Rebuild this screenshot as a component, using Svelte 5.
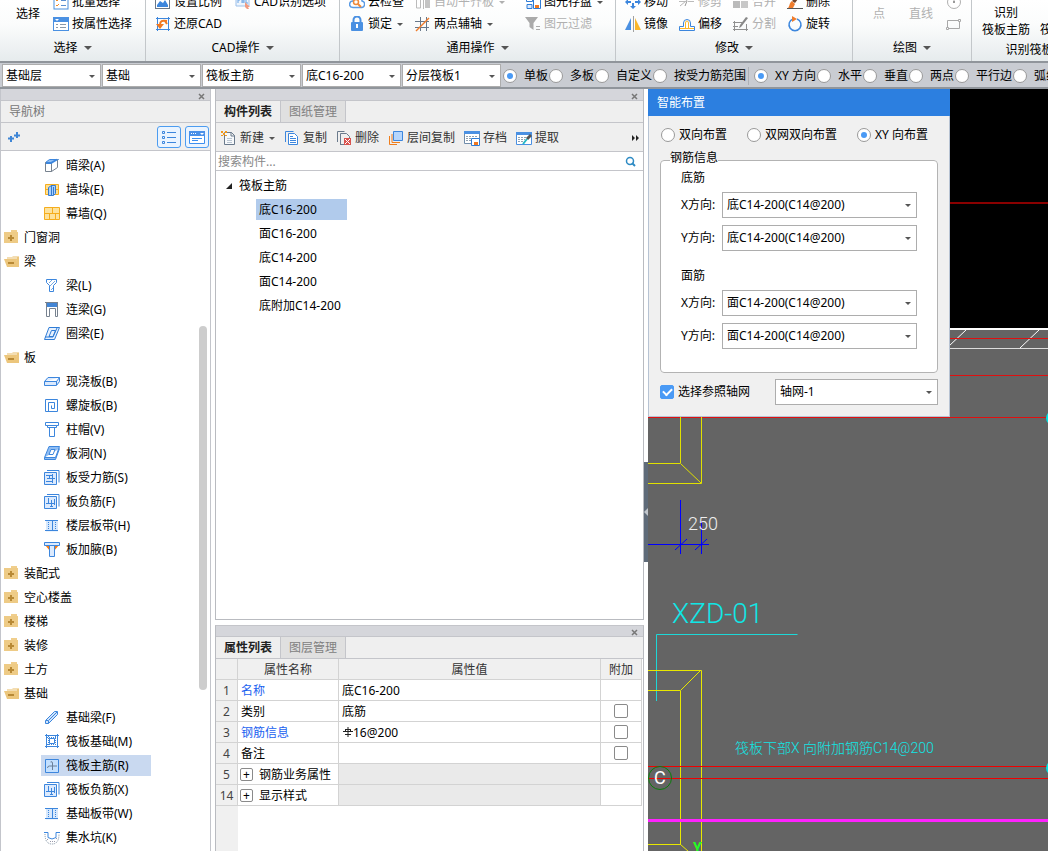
<script>
	const icons = {
		batch: '<rect x="1" y="2" width="14" height="13" fill="#fff" stroke="#4a8fdc"/><path d="M3 6l1 1 2-2M3 11l1 1 2-2" fill="none" stroke="#f08a24"/><path d="M8 6.5h5M8 11.5h5" stroke="#5b8fd0"/>',
		attr: '<rect x=".5" y="1.5" width="15" height="13" fill="#fff" stroke="#4a90e2"/><path d="M0 1h16v5H0z" fill="#4a90e2"/><path d="M2 3h4l-2 2z" fill="#fff"/><path d="M3 8.5h2M3 11.5h2M7 8.5h6M7 11.5h6" stroke="#8a98a8"/>',
		image: '<rect x=".5" y="1.5" width="14" height="13" fill="#fff" stroke="#6d7886"/><path d="M2 13V11l3-4 3 2 2-3 3 5v2z" fill="#3c86dd"/>',
		restore: '<path d="M2.5 1v14M13.5 1v14M1 2.5h14M1 13.5h14" stroke="#3c86dd"/><path d="M5 9c0-4 2-5 7-4" fill="none" stroke="#f07820" stroke-width="2"/><path d="M10 5l2 3" stroke="#f07820" stroke-width="2"/><path d="M1 8h8l-4 5z" fill="#f07820"/>',
		cadopt: '<path d="M1 3h13v9H1z" fill="#eef5fd" stroke="#9cc0ea"/><path d="M3 9V6h2M7 9V6h2v3M7 8h2M11 6v3h2" fill="none" stroke="#6ba4e4"/><path d="M10 8l5 5-2 0 1 2-2 0-2-2z" fill="#f29b80"/>',
		cloud: '<path d="M4 13.5C-1 13 0 7 4 7c1-5 9-4 9 0 4 1 3 6 0 6.5z" fill="#fff" stroke="#5b9be4" stroke-width="1.5"/><circle cx="7" cy="8" r="2.5" fill="none" stroke="#ef8a3a" stroke-width="1.5"/><path d="M9 10l3 3" stroke="#ef8a3a" stroke-width="2"/>',
		lock: '<path d="M4.5 7V4a3.5 3.5 0 017 0v3" fill="none" stroke="#4a90e2" stroke-width="2"/><rect x="2" y="6" width="12" height="9" rx="1" fill="#4a90e2"/><path d="M8 8v4" stroke="#fff" stroke-width="2"/>',
		align: '<path d="M1.5 3h4v11h-4zM8.5 1v14" fill="none" stroke="#bbb"/><path d="M10 6h5v8h-5z" fill="#c4c4c4"/>',
		axis: '<path d="M0 5.5h14M0 11.5h14M5.5 1v14M11.5 1v14" stroke="#68788a"/><path d="M1 15L14 2" stroke="#ef7d2d" stroke-width="1.5"/>',
		save: '<path d="M1.5 2.5h6v5h-6z" fill="#fff" stroke="#2f7cd6"/><path d="M2 10.5h5v4H2z" fill="#dbeaff" stroke="#2f7cd6"/><path d="M8.5 5.5h7v9h-7z" fill="#fff" stroke="#2f7cd6"/><path d="M10 11h4v3h-4z" fill="#f07820"/>',
		filter: '<path d="M0 1h13L8.5 7v7l-4-3V7z" fill="#aaa"/><path d="M11 10.5h4M11 13.5h4" stroke="#aaa"/>',
		move: '<path d="M8 0l3 3H9v3H7V3H5zM8 15l3-3H9V9H7v3H5zM0 8l3-3v2h3v2H3v2zM16 8l-3-3v2h-3v2h3v2z" fill="#3c86dd"/>',
		mirror: '<path d="M6 2v12H0z" fill="#4a90e2"/><path d="M10 2v12h6z" fill="#fcb72a"/><path d="M8.5 0v16" stroke="#a0a0a0"/>',
		trim: '<path d="M1 12L13 2" stroke="#b6b6b6"/><path d="M0 7.5h6M9 7.5h6" stroke="#bbb"/><path d="M6 12l2-5" stroke="#999"/>',
		offset: '<path d="M.5 14.5h15v-4h-4V7a3.5 3.5 0 10-7 0v3.5h-4z" fill="#fff" stroke="#3c86dd"/><path d="M1 12.5h14M6.5 12V7a1.5 2 0 013 0v5" fill="none" stroke="#fcb72a"/>',
		merge: '<rect x="0" y="7" width="7" height="7" fill="#bbb"/><rect x="8" y="7" width="7" height="7" fill="#c8c8c8"/>',
		split: '<path d="M0 6.5h9M0 13.5h15M1.5 5v10M13.5 8v7M0 10.5h5" fill="none" stroke="#909090"/><path d="M15 2l-7 9-2 1 1-3 6-8z" fill="#888"/>',
		erase: '<path d="M0 14.5h16" stroke="#555"/><path d="M14 1l-6 8-3-2 7-7z" fill="#70442c"/><path d="M5 7l3 3-2 4H1c2-2 1-5 4-7z" fill="#ef7c2c"/>',
		rotate: '<path d="M6 3a6 6 0 104 0" fill="none" stroke="#3c86dd" stroke-width="1.5"/><path d="M5 0l5 3-5 3z" fill="#ef7d2d"/>',
		circle: '<circle cx="8" cy="8" r="6.5" fill="none" stroke="#b0b0b0"/><path d="M8 8V2" stroke="#b0b0b0"/><rect x="7" y="7" width="2" height="2" fill="#999"/>',
		rect: '<path d="M1.5 4.5h12v8h-12z" fill="none" stroke="#a8a8a8"/><path d="M.5 11.5h2v2h-2zM12.5 3.5h2v2h-2z" fill="#fff" stroke="#a8a8a8"/>',
		folder: '<path d="M7 0h6v2H7z" fill="#f0ce8c"/><path d="M0 2h14v11H0z" fill="#eecb86"/><path d="M6 5h2v2h2v2H8v2H6V9H4V7h2z" fill="#b88935"/>',
		open: '<path d="M3 3h5l1-1h6v11h-2V6H3z" fill="#f3ddb2"/><path d="M0 5h12l3 8H3z" fill="#ecc67c"/><path d="M12 5h1V3h2v10h-2z" fill="#ecc67c"/><path d="M4 8h6v2H4z" fill="#b88935"/>',
		hidden: '<path d="M1.5 4.5l4-3h9l-4 3z" fill="#8fbdf3" stroke="#3c86dd"/><path d="M1.5 4.5h6v9h-6zM7.5 4.5v9l6-4v-8" fill="#fff" stroke="#77828f"/><path d="M2 5h5l6-3.5" fill="none" stroke="#3c86dd" stroke-width="2"/>',
		pier: '<path d="M1.5 2.5h13v10h-13z" fill="#fddf93" stroke="#f5ad1d"/><path d="M1 7.5h14" stroke="#f5ad1d"/><path d="M4.5 5.5l3-2h4v8l-2 2h-5zM7.5 3v10M9.5 5v8" fill="#a9cffa" stroke="#347bd0"/>',
		curtain: '<path d="M.5 1.5h15v12H.5zM0 7.5h16M8.5 2v6M5.5 8v5M11.5 8v5" fill="#fde29c" stroke="#f5ad1d"/>',
		beam: '<path d="M2.5 1.5h10v3l-3 3v6h-4v-6l-3-3z" fill="#fff" stroke="#3c86dd"/><path d="M5 5l3-3M6 8l5-5M7 12l2-2" stroke="#78a9e0"/>',
		link: '<path d="M2.5 .5h11v14h-2v-8h-6v8h-3z" fill="#fff" stroke="#77828f"/><path d="M3 1h10v4H3z" fill="#4285d5"/><path d="M1 .5h13" stroke="#77828f"/>',
		ring: '<path d="M5 1.5h10.5l-5 12H.5zM7.5 4.5h4l-2.5 6h-4z" fill="#e7f1fe" stroke="#2f7cd6"/><path d="M1 11h8l4-9" fill="none" stroke="#2f7cd6"/>',
		slab: '<path d="M4 3.5h11.5l-3 4H.5zM.5 7.5v4h12l3-4v-4M12.5 7v4" fill="#dceafd" stroke="#3c86dd"/>',
		spiral: '<path d="M1.5 1.5h12v12h-12v-12M4.5 14V4.5h6v6h-3v-3" fill="none" stroke="#3c86dd"/>',
		cap: '<path d="M1.5 .5h13v3h-13z" fill="#fff" stroke="#3c86dd"/><path d="M3.5 3.5h9v2h-9zM5.5 5.5h5v9h-5z" fill="#fff" stroke="#3c86dd"/>',
		hole: '<path d="M5 .5h10.5l-4 11H.5zM.5 11.5v2h11l4-11" fill="#8fbdf3" stroke="#3c86dd"/><path d="M7 3.5h4l-2 5H5z" fill="#fff" stroke="#3c86dd"/>',
		stress: '<path d="M3 .5h12v12" fill="none" stroke="#3c86dd"/><path d="M.5 2.5h12v12H.5z" fill="#dceafd" stroke="#3c86dd"/><path d="M2 5.5h7M3 8.5h8M2 11.5h7M5.5 5v3M8.5 4v9" stroke="#3c86dd"/>',
		negative: '<path d="M3 .5h12v12" fill="none" stroke="#3c86dd"/><path d="M.5 2.5h12v12H.5z" fill="#dceafd" stroke="#3c86dd"/><path d="M4.5 4v6M7.5 6v7M10.5 5v6M2 9.5h9M6 12.5h3" stroke="#3c86dd"/>',
		band: '<path d="M2 2.5h12v11H2z" fill="#d7e8fc"/><path d="M1 2.5h13M1 12.5h13M8.5 2v11" stroke="#3c86dd"/><path d="M4.5 4v8M11.5 4v8" stroke="#3c86dd" stroke-dasharray="1 1"/>',
		haunch: '<path d="M1 3h5v6zM15 3h-5v6z" fill="#f57c14"/><path d="M.5 .5h15v3H.5z" fill="#dceafd" stroke="#3c86dd"/><path d="M5.5 3.5h5v11h-5z" fill="#dceafd" stroke="#3c86dd"/>',
		fbeam: '<path d="M1.5 10.5l9-9h3v3l-9 9h-3z" fill="#d2e5fc" stroke="#3c86dd"/><path d="M2 10.5h2.5v3M5 10l8-8" fill="none" stroke="#3c86dd"/>',
		raft: '<path d="M1 1.5h14M1 12.5h14M2.5 0v14M13.5 0v14M5.5 4.5h5v5h-5z" fill="none" stroke="#3c86dd"/><path d="M3 3.5h10M3 10.5h10M4.5 2v10M11.5 2v10" stroke="#3c86dd" stroke-dasharray="1 1"/>',
		rebar: '<path d="M1.5 1.5h13v13h-13z" fill="#c3e0ff" stroke="#3c86dd"/><path d="M8.5 12V5q0-2-2-1M3.5 10q0-2 2-2H13" fill="none" stroke="#6b8099"/>',
		pit: '<path d="M0 2.5h4v5q4 3 8 0v-5h4" fill="none" stroke="#3c86dd"/><path d="M1 4q0 10 7 10t7-10" fill="none" stroke="#7c8ea0" stroke-dasharray="1 1"/><path d="M3 9.5h2M6 11.5h5M12 8.5h2" stroke="#99a" stroke-dasharray="1 1"/>',
		create: '<path d="M3.5 2.5h7l3 3v9h-10zM10 2v4h4" fill="#f7f9fb" stroke="#6a7a8c"/><path d="M6 8.5h5M6 10.5h5M6 12.5h5" stroke="#b8c4d0"/><path d="M0 1h2v2H0zM4 1h2v2H4zM2 3h2v2H2zM0 5h2v1H0zM4 5h2v1H4z" fill="#f39a1d"/>',
		copy: '<path d="M1.5 12V1.5h8" fill="none" stroke="#3c86dd"/><path d="M4.5 3.5h6l3 3v8h-9z" fill="#fff" stroke="#3c86dd"/><path d="M6 6.5h3M6 8.5h6M6 10.5h6M6 12.5h6" stroke="#3c86dd"/>',
		remove: '<path d="M1.5 12V1.5h7M4.5 14.5v-11h6l3 3v2M4 14.5h4" fill="none" stroke="#6a7a8c"/><path d="M8 8h7v7H8z" fill="#d9534f"/><path d="M9 9l5 5M14 9l-5 5" stroke="#fff"/>',
		layer: '<path d="M1.5 6v8.5H9M4 4v8.5h8" fill="none" stroke="#ee7d1c"/><path d="M5.5 1.5h9v9h-9z" fill="#b5d6fd" stroke="#3c86dd"/>',
		archive: '<path d="M.5 1.5h15v12H.5z" fill="#fff" stroke="#6f8caa"/><path d="M0 1h16v3H0z" fill="#4a90e2"/><path d="M2 6.5h12M2 8.5h6M2 10.5h6" stroke="#8fa0b0" stroke-dasharray="2 1"/><path d="M7.5 8.5h8v7h-8z" fill="#fff" stroke="#2f7cd6"/><path d="M10 12h4v3h-4z" fill="#f07820"/>',
		extract: '<path d="M.5 2.5h15v12H.5z" fill="#fff" stroke="#4a90e2"/><path d="M0 2h16v3H0z" fill="#4a90e2"/><path d="M2 7.5h8M2 9.5h7M2 11.5h6" stroke="#8fa0b0" stroke-dasharray="2 1"/><path d="M15 5l-4 4" stroke="#555" stroke-width="3"/><path d="M11 9l-4 5" stroke="#25b8c4" stroke-width="2"/>',
		listview: '<path d="M1.5 2.5h2v2h-2zM1.5 7.5h2v2h-2zM1.5 12.5h2v2h-2z" fill="none" stroke="#3c86dd"/><path d="M6 3.5h9M6 8.5h9M6 13.5h9" stroke="#3c86dd"/>',
		cardview: '<path d="M.5 2.5h15v12H.5z" fill="#fff" stroke="#3c8ff0"/><path d="M0 2h16v5H0z" fill="#4a90e8"/><path d="M2 4.5h6" stroke="#fff" stroke-dasharray="1 1"/><path d="M11 4h4l-2 2z" fill="#fff"/><path d="M3 9.5h10M3 11.5h6" stroke="#3c8ff0"/>'
	};

	const edit = [
		{ icon: 'move', label: '移动' },
		{ icon: 'trim', label: '修剪', disabled: true },
		{ icon: 'merge', label: '合并', disabled: true },
		{ icon: 'erase', label: '删除' },
		{ icon: 'mirror', label: '镜像' },
		{ icon: 'offset', label: '偏移' },
		{ icon: 'split', label: '分割', disabled: true },
		{ icon: 'rotate', label: '旋转' }
	];

	const common = [
		{ icon: 'cloud', label: '云检查' },
		{ icon: 'align', label: '自动平齐板', disabled: true, menu: true },
		{ icon: 'save', label: '图元存盘', menu: true },
		{ icon: 'lock', label: '锁定', menu: true },
		{ icon: 'axis', label: '两点辅轴', menu: true },
		{ icon: 'filter', label: '图元过滤', disabled: true }
	];

	const cad = [
		{ icon: 'image', label: '设置比例' },
		{ icon: 'cadopt', label: 'CAD识别选项' },
		{ icon: 'restore', label: '还原CAD' }
	];

	const select = [
		{ icon: 'batch', label: '批量选择' },
		{ icon: 'attr', label: '按属性选择' }
	];

	const filters = [
		{ name: '楼层', value: '基础层' },
		{ name: '类别', value: '基础' },
		{ name: '构件类型', value: '筏板主筋' },
		{ name: '构件', value: '底C16-200' },
		{ name: '分层', value: '分层筏板1' }
	];

	const ranges = ['单板', '多板', '自定义', '按受力筋范围'];
	const directions = ['XY 方向', '水平', '垂直', '两点', '平行边', '弧线边'];
	let range = $state('单板');
	let direction = $state('XY 方向');

	const tree = [
		{ icon: 'hidden', label: '暗梁(A)' },
		{ icon: 'pier', label: '墙垛(E)' },
		{ icon: 'curtain', label: '幕墙(Q)' },
		{ icon: 'folder', label: '门窗洞' },
		{ icon: 'open', label: '梁' },
		{ icon: 'beam', label: '梁(L)' },
		{ icon: 'link', label: '连梁(G)' },
		{ icon: 'ring', label: '圈梁(E)' },
		{ icon: 'open', label: '板' },
		{ icon: 'slab', label: '现浇板(B)' },
		{ icon: 'spiral', label: '螺旋板(B)' },
		{ icon: 'cap', label: '柱帽(V)' },
		{ icon: 'hole', label: '板洞(N)' },
		{ icon: 'stress', label: '板受力筋(S)' },
		{ icon: 'negative', label: '板负筋(F)' },
		{ icon: 'band', label: '楼层板带(H)' },
		{ icon: 'haunch', label: '板加腋(B)' },
		{ icon: 'folder', label: '装配式' },
		{ icon: 'folder', label: '空心楼盖' },
		{ icon: 'folder', label: '楼梯' },
		{ icon: 'folder', label: '装修' },
		{ icon: 'folder', label: '土方' },
		{ icon: 'open', label: '基础' },
		{ icon: 'fbeam', label: '基础梁(F)' },
		{ icon: 'raft', label: '筏板基础(M)' },
		{ icon: 'rebar', label: '筏板主筋(R)' },
		{ icon: 'negative', label: '筏板负筋(X)' },
		{ icon: 'band', label: '基础板带(W)' },
		{ icon: 'pit', label: '集水坑(K)' }
	];
	let current = $state('筏板主筋(R)');

	const tools = [
		{ icon: 'create', label: '新建', menu: true },
		{ icon: 'copy', label: '复制' },
		{ icon: 'remove', label: '删除' },
		{ icon: 'layer', label: '层间复制' },
		{ icon: 'archive', label: '存档' },
		{ icon: 'extract', label: '提取' }
	];

	const components = ['底C16-200', '面C16-200', '底C14-200', '面C14-200', '底附加C14-200'];
	let component = $state('底C16-200');

	const props = [
		{ no: 1, name: '名称', value: '底C16-200', key: true },
		{ no: 2, name: '类别', value: '底筋', extra: true },
		{ no: 3, name: '钢筋信息', value: '16@200', key: true, rebar: true, extra: true },
		{ no: 4, name: '备注', value: '', extra: true },
		{ no: 5, name: '钢筋业务属性', group: true },
		{ no: 14, name: '显示样式', group: true }
	];

	const layouts = ['双向布置', '双网双向布置', 'XY 向布置'];
	let layout = $state('XY 向布置');
	let useGrid = $state(true);

	const rebars = [
		{ title: '底筋', value: '底C14-200(C14@200)' },
		{ title: '面筋', value: '面C14-200(C14@200)' }
	];
</script>

{#snippet icon(name)}
	<svg class="icon" viewBox="0 0 16 16" aria-hidden="true">{@html icons[name]}</svg>
{/snippet}

{#snippet tool(item)}
	<button class="tool" disabled={item.disabled}>
		{@render icon(item.icon)}
		<span>{item.label}</span>
		{#if item.menu}<i class="arrow"></i>{/if}
	</button>
{/snippet}

{#snippet closer()}
	<div class="strip">
		<button aria-label="关闭">
			<svg viewBox="0 0 7 7"><path d="M1 1l5 5M6 1L1 6" stroke="#777" stroke-width="1.5" /></svg>
		</button>
	</div>
{/snippet}

<div class="app">
	<header class="ribbon">
		<section class="group pick">
			<div class="content">
				<button class="big">选择</button>
				<div class="grid">
					{#each select as item}{@render tool(item)}{/each}
				</div>
			</div>
			<button class="caption">选择<i class="arrow"></i></button>
		</section>
		<section class="group cad">
			<div class="grid">
				{#each cad as item}{@render tool(item)}{/each}
			</div>
			<button class="caption">CAD操作<i class="arrow"></i></button>
		</section>
		<section class="group common">
			<div class="grid">
				{#each common as item}{@render tool(item)}{/each}
			</div>
			<button class="caption">通用操作<i class="arrow"></i></button>
		</section>
		<section class="group modify">
			<div class="grid">
				{#each edit as item}{@render tool(item)}{/each}
			</div>
			<button class="caption">修改<i class="arrow"></i></button>
		</section>
		<section class="group draw">
			<div class="content">
				<button class="big" disabled>点</button>
				<button class="big" disabled>直线</button>
				<div class="grid">
					<button class="tool" disabled aria-label="圆">{@render icon('circle')}</button>
					<button class="tool" disabled aria-label="矩形">{@render icon('rect')}</button>
				</div>
			</div>
			<button class="caption">绘图<i class="arrow"></i></button>
		</section>
		<section class="group detect">
			<div class="content">
				<button class="big">识别<br />筏板主筋</button>
				<button class="big"><br />筏板负筋</button>
			</div>
			<button class="caption">识别筏板主筋</button>
		</section>
	</header>

	<div class="options">
		{#each filters as filter}
			<div class="combo">
				<select aria-label={filter.name}><option>{filter.value}</option></select>
			</div>
		{/each}
		{#each ranges as item}
			<label><input type="radio" name="range" value={item} bind:group={range} />{item}</label>
		{/each}
		<span class="divider"></span>
		{#each directions as item}
			<label><input type="radio" name="direction" value={item} bind:group={direction} />{item}</label>
		{/each}
	</div>

	<main>
		<aside class="nav">
			{@render closer()}
			<h2>导航树</h2>
			<div class="views">
				<button class="add" aria-label="添加">
					<svg viewBox="0 0 12 10"><path d="M0 6.5h6M3 4v6M6 3.5h6M9 0v6" stroke="#3f86d6" stroke-width="2" /></svg>
				</button>
				<button class="view" aria-label="列表">{@render icon('listview')}</button>
				<button class="view" aria-label="图标">{@render icon('cardview')}</button>
			</div>
			<ul class="tree">
				{#each tree as node}
					<li class:folder={node.icon === 'folder' || node.icon === 'open'}>
						<button class:active={node.label === current} onclick={() => (current = node.label)}>
							{@render icon(node.icon)}{node.label}
						</button>
					</li>
				{/each}
			</ul>
			<span class="thumb"></span>
		</aside>

		<div class="middle">
			<section class="panel list">
				{@render closer()}
				<div class="tabs">
					<button class="on">构件列表</button>
					<button>图纸管理</button>
				</div>
				<div class="toolbar">
					{#each tools as item}{@render tool(item)}{/each}
					<button class="more" aria-label="更多">
						<svg viewBox="0 0 8 6"><path d="M0 0l3 3-3 3zM4 0l3 3-3 3z" fill="#222" /></svg>
					</button>
				</div>
				<div class="search">
					<input type="text" placeholder="搜索构件..." aria-label="搜索构件" />
					<button aria-label="搜索">
						<svg viewBox="0 0 12 12"><circle cx="5" cy="5" r="3.5" fill="none" stroke="#2e8bc4" stroke-width="1.5" /><path d="M7 7l3 3" stroke="#2e8bc4" stroke-width="2" /></svg>
					</button>
				</div>
				<div class="components">
					<div class="root">
						<svg viewBox="0 0 6 6"><path d="M6 0v6H0z" fill="#222" /></svg>
						筏板主筋
					</div>
					{#each components as item}
						<button class:active={item === component} onclick={() => (component = item)}>{item}</button>
					{/each}
				</div>
			</section>

			<section class="panel attrs">
				{@render closer()}
				<div class="tabs">
					<button class="on">属性列表</button>
					<button>图层管理</button>
				</div>
				<div class="sheet">
					<table>
						<thead>
							<tr><th class="no"></th><th class="name">属性名称</th><th>属性值</th><th class="extra">附加</th></tr>
						</thead>
						<tbody>
							{#each props as row}
								<tr class:group-row={row.group}>
									<td class="no">{row.no}</td>
									<td class:key={row.key}>
										{#if row.group}<button class="expand" aria-label="展开">+</button>{/if}{row.name}
									</td>
									<td class="value">
										{#if row.rebar}
											<svg viewBox="0 0 10 10"><path d="M5 0v10M2 7.5h6M0 4.5h10M2.5 2v3M7.5 2v3M2 2.5h6" fill="none" stroke="#222" /></svg>
										{/if}{row.value ?? ''}
									</td>
									<td class="extra">
										{#if row.extra}<input type="checkbox" aria-label="附加 {row.name}" />{/if}
									</td>
								</tr>
							{/each}
						</tbody>
					</table>
				</div>
			</section>
		</div>

		<button class="splitter" aria-label="收起"></button>

		<div class="canvas">
			<svg class="drawing" fill="none">
				<rect width="100%" height="239" fill="#000" />
				<path d="M0 114h4000" stroke="#8a0000" stroke-width="2" />
				<path d="M0 240h4000" stroke="#fff" stroke-width="2" />
				<path d="M0 259.5h4000" stroke="#ddd" />
				<path d="M301 257l17-16M372 259l19-18" stroke="#fff" />
				<path d="M0 249.5h4000" stroke="#e01010" />
				<path d="M0 286.5h4000" stroke="#e01010" />
				<path d="M0 328.5h4000" stroke="#e01010" />
				<path d="M32.5 320v54.5H0M53.5 320v74.5H0M33 375l20 19" stroke="#e0e000" />
				<path d="M32.5 411v54M53.5 432v33M0 455.5h61M27 461l12-11M47 461l12-11" stroke="#00f" />
				<path d="M8.5 612v-66.5h141" stroke="#1cd8d8" />
				<path d="M0 581.5h53.5V762M0 601.5h32.5v154l8 7M0 755.5h33M33 601l20-20" stroke="#e8e800" />
				<path d="M0 677.5h4000M0 689.5h4000" stroke="#f00000" />
				<path d="M0 731.5h4000" stroke="#f2f" stroke-width="3" />
				<circle cx="12" cy="689" r="11.5" stroke="#0a7d0a" />
				<circle cx="405" cy="329" r="6" stroke="#00e5e5" stroke-width="2" />
				<circle cx="405" cy="679" r="6" stroke="#00e5e5" stroke-width="2" />
				<text class="dim" x="40" y="441">250</text>
				<text class="mark" x="24" y="534">XZD-01</text>
				<text class="note" x="87" y="664">筏板下部X 向附加钢筋C14@200</text>
				<text class="axis" x="6" y="695">C</text>
				<text class="ucs" x="45" y="764">Y</text>
			</svg>

			<form class="dialog">
				<h2>智能布置</h2>
				<div class="modes">
					{#each layouts as item}
						<label><input type="radio" name="layout" value={item} bind:group={layout} />{item}</label>
					{/each}
				</div>
				<fieldset>
					<legend>钢筋信息</legend>
					{#each rebars as group}
						<h3>{group.title}</h3>
						{#each ['X', 'Y'] as axis}
							<label class="field">
								<span>{axis}方向:</span>
								<span class="combo"><select><option>{group.value}</option></select></span>
							</label>
						{/each}
					{/each}
				</fieldset>
				<div class="foot">
					<label><input type="checkbox" bind:checked={useGrid} />选择参照轴网</label>
					<div class="combo"><select aria-label="轴网"><option>轴网-1</option></select></div>
				</div>
			</form>
		</div>
	</main>
</div>

<style>
	:global(body) {
		margin: 0;
		overflow: hidden;
	}

	.app {
		display: flex;
		flex-direction: column;
		height: 100vh;
		overflow: hidden;
		background: #fff;
		color: #000;
		font: 12px/16px 'Noto Sans', 'Noto Sans CJK SC', sans-serif;
		white-space: nowrap;
	}

	* {
		box-sizing: border-box;
	}

	button,
	input,
	select {
		margin: 0;
		padding: 0;
		border: 0;
		background: none;
		color: inherit;
		font: inherit;
	}

	h2,
	h3 {
		margin: 0;
		font-size: 12px;
		font-weight: normal;
	}

	.icon {
		display: block;
		flex: none;
		width: 16px;
		height: 16px;
	}

	.arrow {
		border: 4px solid transparent;
		border-top-color: #555;
		border-bottom: 0;
	}

	.tool {
		display: flex;
		align-items: center;
		gap: 3px;
		height: 22px;
	}

	.tool .arrow {
		margin-left: 2px;
		border-width: 3px;
		border-bottom: 0;
	}

	button:disabled {
		color: #b0b0b0;
	}

	button:disabled .arrow {
		border-top-color: #b0b0b0;
	}

	/* ribbon */
	.ribbon {
		display: flex;
		flex: none;
		height: 61px;
		overflow: hidden;
		background: linear-gradient(#fff, #fbfcfc 40%, #e6ebed);
	}

	/* rows stack from the bottom edge, the first one runs out at the top */
	.group {
		display: flex;
		flex: none;
		flex-direction: column;
		justify-content: flex-end;
		border-right: 1px solid #c3c7ca;
	}

	.group > * {
		flex: none;
	}

	.content {
		display: flex;
	}

	.grid {
		display: grid;
		padding-left: 9px;
	}

	.caption {
		display: flex;
		align-items: center;
		justify-content: center;
		gap: 6px;
		height: 26px;
	}

	.big {
		height: 44px;
		line-height: 17px;
		text-align: center;
	}

	.pick {
		width: 146px;
	}

	.pick .big {
		width: 44px;
		padding-left: 12px;
	}

	.cad {
		width: 194px;
	}

	.cad .grid {
		grid-template-columns: 80px 105px;
	}

	.common {
		width: 276px;
	}

	.common .grid {
		grid-template-columns: 66px 110px 90px;
	}

	.modify {
		width: 237px;
	}

	.modify .grid {
		grid-template-columns: repeat(4, 54px);
	}

	.draw {
		width: 119px;
	}

	.draw .big {
		width: 42px;
		padding-left: 10px;
	}

	.detect {
		width: 140px;
	}

	.detect .content {
		gap: 10px;
		padding-left: 10px;
	}

	.detect .big {
		height: 36px;
	}

	.detect .caption {
		height: 22px;
	}

	/* option bar */
	.options {
		display: flex;
		flex: none;
		align-items: center;
		height: 28px;
		padding: 1px 0 0 1px;
		overflow: hidden;
		border-top: 2px solid #90959b;
		border-bottom: 2px solid #90959b;
		background: #c9ccd2;
	}

	.combo {
		position: relative;
		display: block;
	}

	.combo::after {
		position: absolute;
		top: 50%;
		right: 6px;
		margin-top: -1px;
		border: 3px solid transparent;
		border-top-color: #555;
		border-bottom: 0;
		content: '';
		pointer-events: none;
	}

	select {
		display: block;
		width: 100%;
		height: 26px;
		padding: 0 4px;
		border: 1px solid #adadad;
		border-radius: 0;
		background: #fff;
		appearance: none;
	}

	.options .combo {
		flex: none;
		width: 100px;
		padding-left: 1px;
	}

	.options select {
		height: 23px;
		padding: 0 3px;
	}

	.options label {
		display: flex;
		flex: none;
		align-items: center;
		gap: 7px;
		padding-left: 1px;
	}

	.options .combo + label {
		padding-left: 2px;
	}

	.divider {
		flex: none;
		width: 1px;
		height: 18px;
		margin: 0 4px 0 2px;
		background: #aeb1b6;
	}

	input[type='radio'] {
		display: grid;
		flex: none;
		place-content: center;
		width: 14px;
		height: 14px;
		border: 1px solid #999;
		border-radius: 50%;
		background: #fff;
		appearance: none;
	}

	input[type='radio']:checked::before {
		width: 6px;
		height: 6px;
		border-radius: 50%;
		background: #4a9af5;
		content: '';
	}

	input[type='checkbox'] {
		display: block;
		width: 14px;
		height: 14px;
		border: 1px solid #8a8a8a;
		border-radius: 2px;
		background: #fff;
		appearance: none;
	}

	main {
		display: flex;
		flex: 1;
		min-height: 0;
	}

	.strip {
		display: flex;
		flex: none;
		justify-content: flex-end;
		height: 12px;
		padding: 3px 5px 0 0;
		border-bottom: 1px solid #c4c5ca;
		background: #d5d6db;
	}

	.strip svg {
		display: block;
		width: 7px;
		height: 7px;
	}

	/* navigation */
	.nav {
		position: relative;
		display: flex;
		flex: none;
		flex-direction: column;
		width: 211px;
		overflow: hidden;
		border: solid #c3c5cb;
		border-width: 0 1px;
	}

	.nav h2 {
		flex: none;
		height: 22px;
		padding-left: 8px;
		border-bottom: 1px solid #c4c5ca;
		background: #efefef;
		color: #777;
		line-height: 21px;
	}

	.views {
		display: flex;
		flex: none;
		align-items: center;
		gap: 4px;
		height: 28px;
		padding: 0 1px 0 7px;
		border-bottom: 1px solid #c4c5ca;
		background: #efefef;
	}

	.add {
		width: 12px;
		margin-right: auto;
	}

	.add svg {
		display: block;
	}

	.view {
		display: grid;
		place-content: center;
		width: 24px;
		height: 22px;
		border: 1px solid #4c9cf0;
		border-radius: 3px;
		background: #eaf4ff;
	}

	.tree {
		flex: 1;
		margin: 0;
		padding: 2px 0 0;
		list-style: none;
	}

	.tree li {
		height: 24px;
		padding: 2px 0 1px 40px;
	}

	.tree button {
		display: flex;
		align-items: center;
		gap: 6px;
		min-width: 110px;
		height: 21px;
		padding-left: 3px;
		text-align: left;
	}

	.tree .folder {
		padding-left: 0;
	}

	.tree .folder button {
		gap: 4px;
	}

	.tree .active {
		background: #c9d9f0;
	}

	.thumb {
		position: absolute;
		top: 237px;
		right: 3px;
		width: 8px;
		height: 364px;
		border-radius: 4px;
		background: #cdcdcd;
	}

	/* middle column */
	.middle {
		display: flex;
		flex: none;
		flex-direction: column;
		gap: 5px;
		width: 433px;
		padding-left: 4px;
	}

	.panel {
		display: flex;
		flex-direction: column;
		border: 1px solid #b9bbc0;
		border-top: 0;
	}

	.list {
		flex: 1;
		min-height: 0;
	}

	.attrs {
		flex: none;
		height: 226px;
		border-top: 1px solid #c4c5ca;
		border-bottom: 0;
	}

	.attrs .strip {
		height: 11px;
		padding-top: 2px;
	}

	.tabs {
		display: flex;
		flex: none;
		height: 22px;
		border-bottom: 1px solid #c4c5ca;
		background: #efefef;
	}

	.tabs button {
		width: 65px;
		padding-top: 1px;
		border-right: 1px solid #c4c5ca;
		background: #e0e0e0;
		color: #808080;
	}

	.tabs .on {
		background: #efefef;
		color: #222;
		font-weight: bold;
	}

	.toolbar {
		display: flex;
		flex: none;
		align-items: center;
		gap: 9px;
		height: 29px;
		padding: 2px 3px 0 5px;
		border-bottom: 1px solid #c4c5ca;
		background: #efefef;
		color: #333;
	}

	.more {
		width: 8px;
		margin-left: auto;
	}

	.more svg {
		display: block;
	}

	.search {
		display: flex;
		flex: none;
		align-items: center;
		height: 19px;
		padding: 1px 6px 0 2px;
		border-bottom: 1px solid #c4c5ca;
	}

	.search input {
		flex: 1;
		outline: 0;
	}

	.search input::placeholder {
		color: #888;
	}

	.search svg {
		display: block;
		width: 12px;
		height: 12px;
	}

	.components {
		display: flex;
		flex-direction: column;
		align-items: flex-start;
		gap: 3px;
		padding: 4px 0 0 40px;
	}

	.root {
		display: flex;
		align-items: center;
		gap: 7px;
		height: 21px;
		margin-left: -30px;
	}

	.root svg {
		width: 6px;
	}

	.components button {
		min-width: 91px;
		height: 21px;
		padding: 0 3px;
		text-align: left;
	}

	.components .active {
		background: #b1cbec;
	}

	.sheet {
		flex: 1;
		padding-right: 1px;
		background: linear-gradient(90deg, #f0f0f0 22px, #fff 22px);
	}

	table {
		width: 100%;
		border-collapse: separate;
		border-spacing: 0;
		table-layout: fixed;
	}

	th,
	td {
		height: 21px;
		padding: 1px 3px 0;
		border: solid #d3d3d3;
		border-width: 0 1px 1px 0;
		background: #fff;
		font-weight: normal;
	}

	th {
		background: #f0f0f0;
		color: #333;
	}

	.no {
		width: 22px;
		padding: 1px 0 0;
		background: #f0f0f0;
		color: #444;
		text-align: center;
	}

	.name {
		width: 101px;
	}

	.extra {
		width: 41px;
	}

	td.extra {
		padding-top: 0;
	}

	td.extra input {
		margin: 0 auto;
	}

	.key {
		color: #1a62f0;
	}

	.value svg {
		width: 10px;
		height: 10px;
		margin-left: 1px;
		vertical-align: 0;
	}

	.group-row .value {
		background: #eaeaea;
	}

	.expand {
		width: 13px;
		height: 13px;
		margin: 0 6px 0 -1px;
		border: 1px solid #8a8a8a;
		border-radius: 2px;
		line-height: 10px;
		vertical-align: 0;
	}

	.splitter {
		position: relative;
		flex: none;
		align-self: flex-start;
		width: 4px;
		height: 100px;
		margin-top: 373px;
		background: #5f6b79;
	}

	.splitter::after {
		position: absolute;
		top: 46px;
		right: 0;
		border: 4px solid transparent;
		border-right-color: #c0c5cb;
		border-left: 0;
		content: '';
	}

	/* drawing area */
	.canvas {
		position: relative;
		flex: 1;
		min-width: 0;
		overflow: hidden;
		background: #646464;
	}

	.drawing {
		display: block;
		width: 100%;
		height: 100%;
	}

	.drawing text {
		fill: #10e6e6;
		font-family: Roboto, 'Noto Sans CJK SC', sans-serif;
		font-weight: 300;
	}

	.drawing .dim {
		fill: #eee;
		font-size: 18px;
	}

	.drawing .mark {
		font-size: 28px;
	}

	.drawing .note {
		font-size: 14px;
	}

	.drawing .axis {
		fill: #fff;
		font-size: 18px;
		font-weight: 400;
	}

	.drawing .ucs {
		fill: #2f2;
		font-size: 14px;
		font-weight: bold;
	}

	.dialog {
		position: absolute;
		top: 0;
		left: 0;
		width: 302px;
		padding: 0 11px 11px;
		border: 1px solid #b7c3d3;
		border-top: 0;
		background: #f0f0f0;
	}

	.dialog h2 {
		height: 27px;
		margin: 0 -12px;
		padding-left: 9px;
		background: #2c7fe0;
		color: #fff;
		line-height: 27px;
	}

	.modes {
		display: flex;
		justify-content: space-between;
		height: 38px;
		padding: 0 10px 0 1px;
	}

	.modes label,
	.foot label {
		display: flex;
		align-items: center;
		gap: 4px;
	}

	fieldset {
		min-width: 0;
		height: 219px;
		margin: 0 0 6px;
		padding: 0 20px;
		border: 1px solid #b3b3b3;
		border-radius: 4px;
		background: #fff;
	}

	legend {
		height: 12px;
		margin-left: -11px;
		padding: 0;
		line-height: 8px;
	}

	h3 {
		height: 26px;
		line-height: 24px;
	}

	.field {
		display: flex;
		align-items: center;
		justify-content: space-between;
		margin-bottom: 7px;
	}

	.field + h3 {
		margin-top: 13px;
	}

	.field .combo {
		width: 195px;
	}

	.foot {
		display: flex;
		align-items: center;
		justify-content: space-between;
	}

	.foot .combo {
		width: 163px;
	}

	.foot input:checked {
		border-color: #4a9af5;
		background: #4a9af5;
	}

	.foot input {
		display: grid;
		place-content: center;
	}

	.foot input:checked::before {
		width: 7px;
		height: 4px;
		margin-top: -2px;
		border: solid #fff;
		border-width: 0 0 2px 2px;
		transform: rotate(-45deg);
		content: '';
	}
</style>
